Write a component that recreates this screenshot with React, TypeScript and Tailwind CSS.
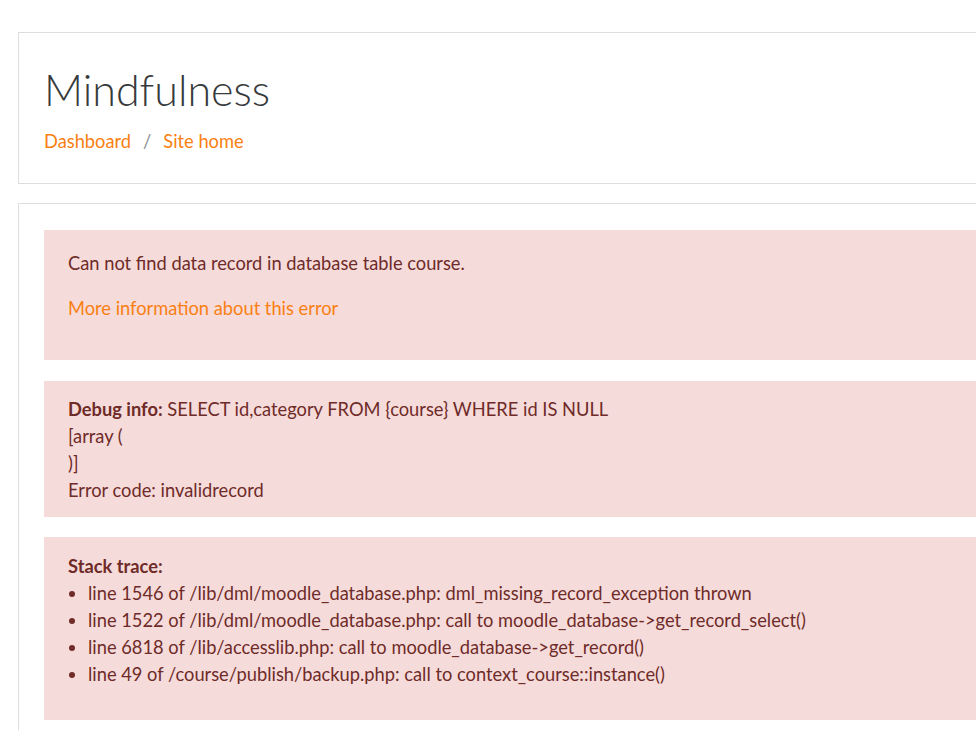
export default function App() {
  const trace = [
    "line 1546 of /lib/dml/moodle_database.php: dml_missing_record_exception thrown",
    "line 1522 of /lib/dml/moodle_database.php: call to moodle_database->get_record_select()",
    "line 6818 of /lib/accesslib.php: call to moodle_database->get_record()",
    "line 49 of /course/publish/backup.php: call to context_course::instance()",
  ];

  return (
    <div className="h-[730px] w-full overflow-hidden bg-white font-['Segoe_UI','Lato',sans-serif] text-[18.3px] leading-[27px] text-[#373a3c]">
      <div className="ml-[18px] w-[1200px] pt-[32px]">
        <header className="border border-[#dedede] px-[25px] pt-[29px] pb-[28px]">
          <h1 className="text-[43px] font-light leading-[56px] text-[#373a3c]">Mindfulness</h1>
          <nav className="mt-[10px] flex items-center leading-[27px]">
            <a href="#" className="text-[#f98012]">Dashboard</a>
            <span className="px-[12px] text-[#868e96]">/</span>
            <a href="#" className="text-[#f98012]">Site home</a>
          </nav>
        </header>

        <main className="mt-[19px] border border-[#dedede] px-[25px] pt-[26px] pb-[40px]">
          <div className="bg-[#f6dbdb] px-[24px] pt-[20px] pb-[20px] text-[#6e2b28]">
            <p className="mb-[18px]">Can not find data record in database table course.</p>
            <p className="mb-[18px]">
              <a href="#" className="text-[#f98012]">More information about this error</a>
            </p>
          </div>

          <div className="mt-[21px] bg-[#f6dbdb] px-[24px] pt-[15px] pb-[13px] text-[#6e2b28]">
            <p>
              <b className="font-bold">Debug info:</b> SELECT id,category FROM {"{course}"} WHERE id IS NULL
              <br />
              [array (
              <br />
              )]
              <br />
              Error code: invalidrecord
            </p>
          </div>

          <div className="mt-[20px] bg-[#f6dbdb] px-[24px] pt-[16px] pb-[32px] text-[#6e2b28]">
            <p className="font-bold">Stack trace:</p>
            <ul className="list-disc pl-[20px]">
              {trace.map((t) => (
                <li key={t}>{t}</li>
              ))}
            </ul>
          </div>
        </main>
      </div>
    </div>
  );
}
